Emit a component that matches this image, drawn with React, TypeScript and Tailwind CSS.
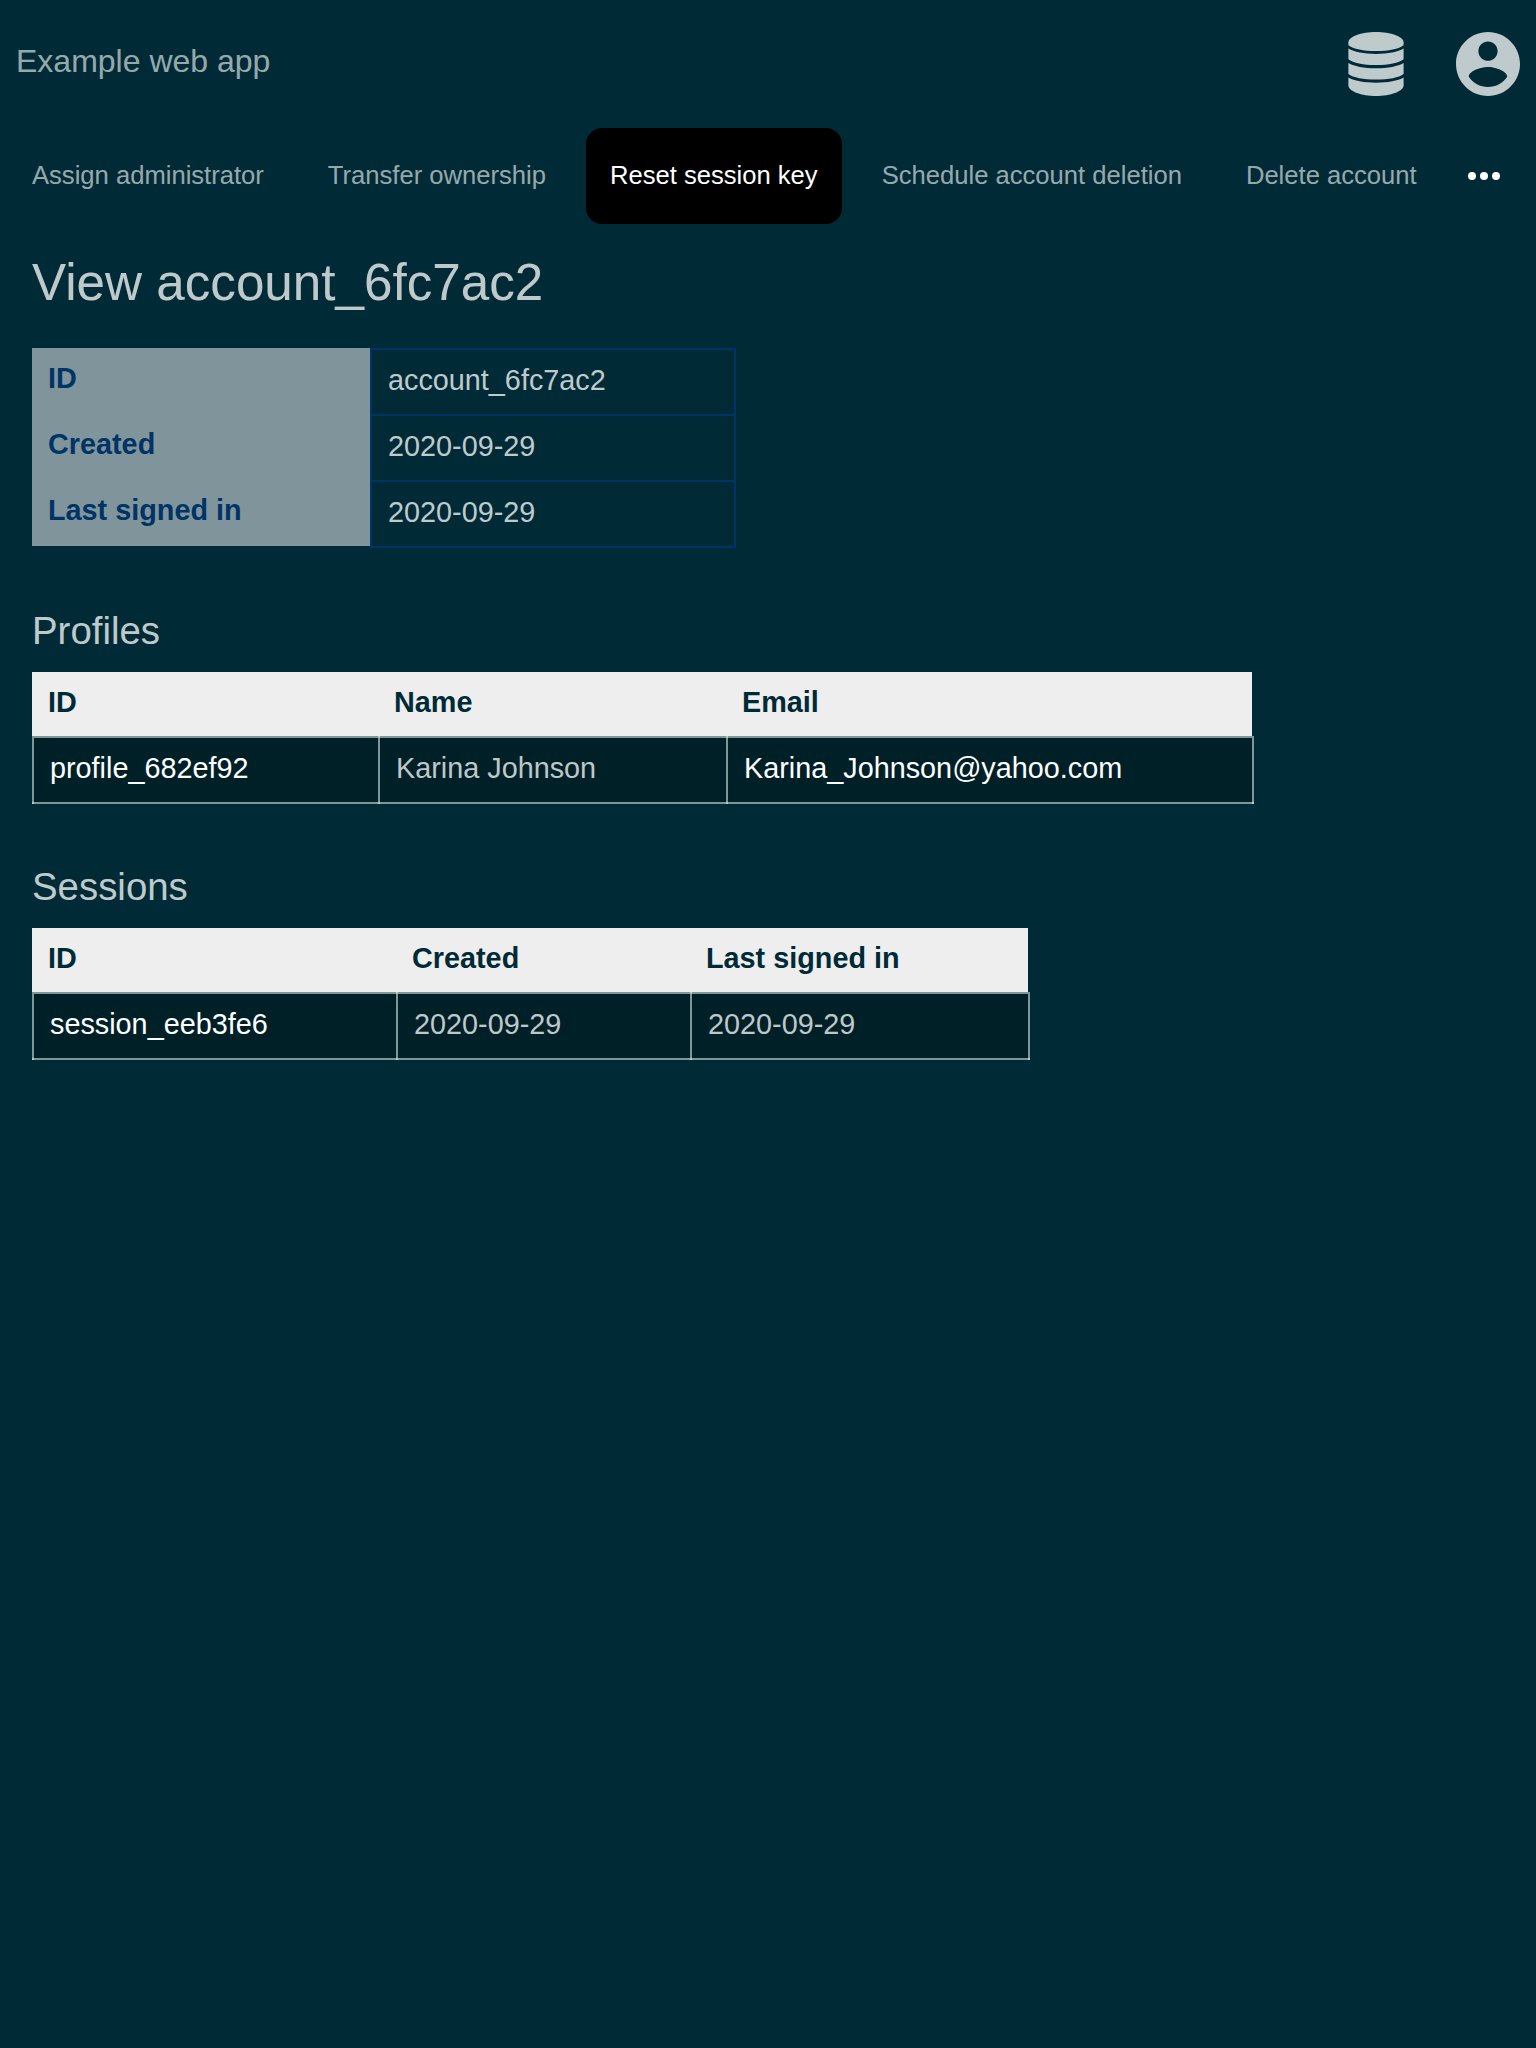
const actions = [
  { label: 'Assign administrator' },
  { label: 'Transfer ownership' },
  { label: 'Reset session key', active: true },
  { label: 'Schedule account deletion' },
  { label: 'Delete account' },
];

const details = [
  ['ID', 'account_6fc7ac2'],
  ['Created', '2020-09-29'],
  ['Last signed in', '2020-09-29'],
];

type Cell = { text: string; link?: boolean };
type GridProps = { columns: string; width: string; headers: string[]; cells: Cell[] };

function DatabaseIcon() {
  return (
    <svg viewBox="0 0 56 64" className="h-16 w-14" fill="currentColor" aria-hidden="true">
      <path d="M28 0C42.500 0 55.600 4.600 55.600 10.300V13.200C51 17 40.500 19 28 19S5 17 .4 13.200V10.300C.4 4.600 13.500 0 28 0Z" />
      <path d="M.4 16.600C6 20 16 22 28 22S50 20 55.600 16.600V27.300C51 31 40.500 33.100 28 33.100S5 31 .4 27.300Z" />
      <path d="M.4 31C6 34.300 16 36.300 28 36.300S50 34.300 55.600 31V41.900C51 45.500 40.500 47.500 28 47.500S5 45.500 .4 41.900Z" />
      <path d="M.4 45.500C6 48.800 16 50.700 28 50.700S50 48.800 55.600 45.500V53.500C55.600 59.300 42.500 64 28 64S.4 59.300 .4 53.500Z" />
    </svg>
  );
}

function AccountIcon() {
  return (
    <svg viewBox="2 2 20 20" className="size-16" fill="currentColor" aria-hidden="true">
      <path d="M12 2C6.480 2 2 6.480 2 12s4.480 10 10 10 10-4.480 10-10S17.520 2 12 2zm0 3c1.660 0 3 1.340 3 3s-1.340 3-3 3-3-1.340-3-3 1.340-3 3-3zm0 14.200c-2.500 0-4.710-1.280-6-3.220.03-1.990 4-3.080 6-3.080 1.990 0 5.970 1.090 6 3.080-1.290 1.940-3.500 3.220-6 3.220z" />
    </svg>
  );
}

function DataGrid({ columns, width, headers, cells }: GridProps) {
  return (
    <div className={width}>
      <div className={`grid h-16 bg-[#eeeeee] font-bold text-[#002b36] ${columns}`}>
        {headers.map((h) => (
          <div key={h} className="px-4 pt-[14px] leading-[33px]">{h}</div>
        ))}
      </div>
      <div className={`grid h-[68px] ${columns}`}>
        {cells.map((c, i) => (
          <div
            key={i}
            className={`relative border-2 border-r-0 border-[#80959a] bg-[#002028] px-4 pt-[14px] leading-[33px] last:-mr-[2px] last:border-r-2 ${c.link ? 'text-white' : 'text-white/75'}`}
          >
            {c.text}
            {/* border joints */}
            {i > 0 && <span className="absolute -top-[2px] -left-[2px] size-[2px] bg-[#bfc9cc]" />}
            <span className="absolute -bottom-[2px] -left-[2px] size-[2px] bg-[#bfc9cc]" />
            {i === cells.length - 1 && (
              <span className="absolute -right-[2px] -bottom-[2px] size-[2px] bg-[#bfc9cc]" />
            )}
          </div>
        ))}
      </div>
    </div>
  );
}

export default function App() {
  return (
    <div className="min-h-[2048px] w-[1536px] overflow-hidden bg-[#002b36] font-['Liberation_Sans',Arial,sans-serif] text-[28.8px] text-white/75">
      <header className="flex h-32 items-center justify-between px-4">
        <div className="-mt-[6px] text-[32px] leading-[37px] text-white/60">Example web app</div>
        <div className="flex gap-[52px] text-[#bfcacd]">
          <DatabaseIcon />
          <AccountIcon />
        </div>
      </header>

      <nav className="flex h-24 gap-4 pl-2 text-[25.6px] whitespace-nowrap">
        {actions.map((a) => (
          <button
            key={a.label}
            className={
              a.active
                ? 'rounded-2xl bg-black px-6 pb-[2px] text-white'
                : 'rounded-2xl px-6 pb-[2px] text-white/60'
            }
          >
            {a.label}
          </button>
        ))}
        <button className="mr-7 ml-auto text-white" aria-label="More">
          <svg viewBox="0 0 24 24" className="size-12" fill="currentColor">
            <circle cx="6" cy="12" r="2" />
            <circle cx="12" cy="12" r="2" />
            <circle cx="18" cy="12" r="2" />
          </svg>
        </button>
      </nav>

      <main className="px-8">
        <h1 className="pt-[29px] text-[51.2px] leading-[59px]">View account_6fc7ac2</h1>

        <div className="mt-[36px] grid w-[704px] grid-cols-[338px_366px]">
          <div className="h-[198px] bg-[#80959b] font-bold text-[#003366]">
            {details.map(([k]) => (
              <div key={k} className="h-[66px] px-4 pt-[14px] leading-[33px]">{k}</div>
            ))}
          </div>
          <div>
            {details.map(([k, v]) => (
              <div key={k} className="-mb-[2px] h-[68px] border-2 border-[#003366] px-4 pt-[14px] leading-[33px]">{v}</div>
            ))}
          </div>
        </div>

        <h2 className="mt-[63px] mb-[19px] text-[38.4px] leading-[44px]">Profiles</h2>
        <DataGrid
          columns="grid-cols-[346px_348px_526px]"
          width="w-[1220px]"
          headers={['ID', 'Name', 'Email']}
          cells={[
            { text: 'profile_682ef92', link: true },
            { text: 'Karina Johnson' },
            { text: 'Karina_Johnson@yahoo.com', link: true },
          ]}
        />

        <h2 className="mt-[61px] mb-[19px] text-[38.4px] leading-[44px]">Sessions</h2>
        <DataGrid
          columns="grid-cols-[364px_294px_338px]"
          width="w-[996px]"
          headers={['ID', 'Created', 'Last signed in']}
          cells={[
            { text: 'session_eeb3fe6', link: true },
            { text: '2020-09-29' },
            { text: '2020-09-29' },
          ]}
        />
      </main>
    </div>
  );
}
